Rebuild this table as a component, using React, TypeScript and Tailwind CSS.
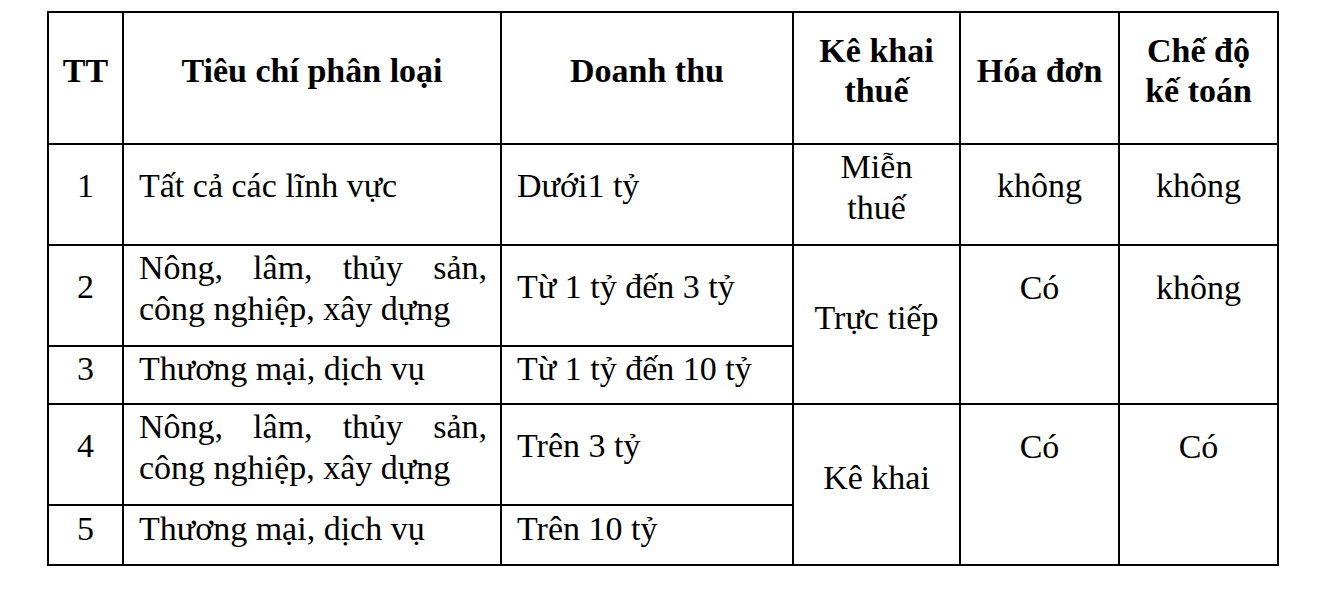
const rows = [
  { tt: "1", field: "Tất cả các lĩnh vực", revenue: "Dưới1 tỷ", h: "h-[101px]", pb: "pb-[20px]", wrap: false },
  { tt: "2", field: "Nông, lâm, thủy sản, công nghiệp, xây dựng", revenue: "Từ 1 tỷ đến 3 tỷ", h: "h-[101px]", pb: "pb-[20px]", wrap: true },
  { tt: "3", field: "Thương mại, dịch vụ", revenue: "Từ 1 tỷ đến 10 tỷ", h: "h-[58px]", pb: "pb-[14px]", wrap: false },
  { tt: "4", field: "Nông, lâm, thủy sản, công nghiệp, xây dựng", revenue: "Trên 3 tỷ", h: "h-[101px]", pb: "pb-[20px]", wrap: true },
  { tt: "5", field: "Thương mại, dịch vụ", revenue: "Trên 10 tỷ", h: "h-[60px]", pb: "pb-[14px]", wrap: false },
];

const border = "border-2 border-black";
const head = `${border} pt-[2px] pb-[16px] align-middle text-center font-bold px-1`;
const tall = `${border} pt-[23px] align-top text-center px-1`;
const merged = `${border} pt-[2px] pb-[16px] align-middle text-center px-1`;
const twoLine = `${border} pt-0 pb-[16px] align-middle leading-[41px]`;

export default function App() {
  return (
    <div className="min-h-screen bg-white pl-[47px] pt-[11px] text-black [font-family:Liberation_Serif,Times_New_Roman,serif] text-[34px] leading-[38px]">
      <table className="w-[1230px] table-fixed border-collapse">
        <colgroup>
          <col className="w-[75px]" />
          <col className="w-[378px]" />
          <col className="w-[292px]" />
          <col className="w-[167px]" />
          <col className="w-[159px]" />
          <col className="w-[159px]" />
        </colgroup>
        <thead>
          <tr className="h-[132px]">
            <th className={head}>TT</th>
            <th className={head}>Tiêu chí phân loại</th>
            <th className={head}>Doanh thu</th>
            <th className={`${head} leading-[40px]`}>
              Kê khai
              <br />
              thuế
            </th>
            <th className={head}>Hóa đơn</th>
            <th className={`${head} leading-[40px]`}>
              Chế độ
              <br />
              kế toán
            </th>
          </tr>
        </thead>
        <tbody>
          {rows.map((r, i) => {
            const cell = `${border} pt-[2px] ${r.pb} align-middle`;
            return (
              <tr key={r.tt} className={r.h}>
                <td className={`${cell} text-center px-1`}>{r.tt}</td>
                <td className={`${r.wrap ? twoLine : cell} pl-[15px] pr-[13px] text-justify`}>{r.field}</td>
                <td className={`${cell} pl-[15px] pr-2`}>{r.revenue}</td>
                {i === 0 && (
                  <>
                    <td className={`${twoLine} text-center px-1`}>
                      Miễn
                      <br />
                      thuế
                    </td>
                    <td className={`${cell} text-center px-1`}>không</td>
                    <td className={`${cell} text-center px-1`}>không</td>
                  </>
                )}
                {i === 1 && (
                  <>
                    <td rowSpan={2} className={merged}>
                      Trực tiếp
                    </td>
                    <td rowSpan={2} className={tall}>
                      Có
                    </td>
                    <td rowSpan={2} className={tall}>
                      không
                    </td>
                  </>
                )}
                {i === 3 && (
                  <>
                    <td rowSpan={2} className={merged}>
                      Kê khai
                    </td>
                    <td rowSpan={2} className={tall}>
                      Có
                    </td>
                    <td rowSpan={2} className={tall}>
                      Có
                    </td>
                  </>
                )}
              </tr>
            );
          })}
        </tbody>
      </table>
    </div>
  );
}
